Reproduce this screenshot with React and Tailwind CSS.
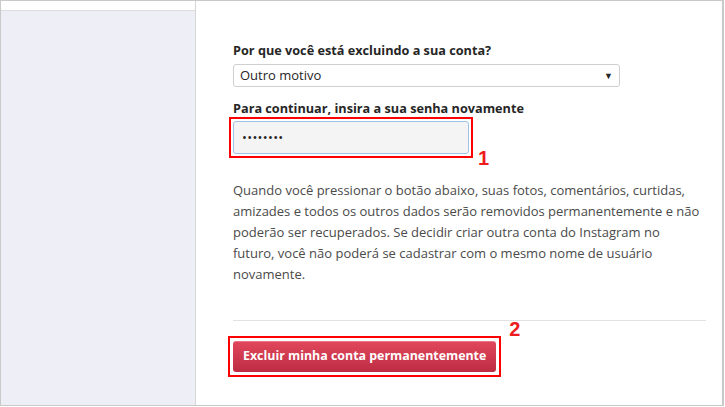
import React from 'react';

const lines = [
  'Quando você pressionar o botão abaixo, suas fotos, comentários, curtidas,',
  'amizades e todos os outros dados serão removidos permanentemente e não',
  'poderão ser recuperados. Se decidir criar outra conta do Instagram no',
  'futuro, você não poderá se cadastrar com o mesmo nome de usuário',
  'novamente.',
];

export default function App() {
  return (
    <div className="w-[725px] h-[407px] bg-white font-['Open_Sans',sans-serif] text-[13px]">
      <div className="flex h-[406px] w-[724px] border border-[#c9c9c9] border-r-2">
        {/* sidebar */}
        <div className="w-[195px] shrink-0 flex flex-col border-r border-[#d6d6d6]">
          <div className="h-[10px] bg-white border-b border-[#dbdbdb]" />
          <div className="flex-1 bg-[#eeeff6]" />
        </div>

        {/* main */}
        <div className="flex-1 pl-[37px] pr-[16px] pt-[40px]">
          <p className="font-bold text-[#262626] leading-[18px] text-[12.7px]">Por que você está excluindo a sua conta?</p>
          <div className="mt-[5px] w-[387px] h-[23px] border border-[#cfcfcf] rounded-[3px] flex items-center justify-between pl-[6px] pr-[6px] text-[#262626]">
            <span>Outro motivo</span>
            <span className="text-[9px]">▼</span>
          </div>

          <p className="mt-[12px] font-bold text-[#262626] leading-[18px] text-[12.7px]">Para continuar, insira a sua senha novamente</p>
          <div className="flex items-end">
            <div className="-ml-[4px] border-2 border-[#ff0000] p-[2px]">
              <div className="w-[236px] h-[33px] bg-[#f4f4f4] border border-[#9fc3e6] rounded-[3px] flex items-center pl-[8px] text-[#262626] tracking-[0.3px]">
                ••••••••
              </div>
            </div>
            <span className="ml-[5px] mb-[-12px] text-[#ee1c1c] font-bold text-[20px] leading-[24px] font-['Liberation_Sans',sans-serif]">1</span>
          </div>

          <div className="mt-[22px] text-[#4a4a4a] leading-[21px] whitespace-nowrap">
            {lines.map((l) => (
              <p key={l}>{l}</p>
            ))}
          </div>

          <div className="mt-[35px] border-t border-[#e2e2e2] w-[473px]" />

          <div className="flex items-start">
            <div className="mt-[15px] -ml-[5px] border-2 border-[#ff0000] p-[3px]">
              <button className="h-[31px] px-[10px] rounded-[3px] bg-gradient-to-b from-[#e2475c] to-[#bd2c43] text-white font-bold text-[12.4px] shadow-[inset_0_1px_0_rgba(255,255,255,0.25)]">
                Excluir minha conta permanentemente
              </button>
            </div>
            <span className="ml-[8px] -mt-[4px] text-[#ee1c1c] font-bold text-[20px] leading-[24px] font-['Liberation_Sans',sans-serif]">2</span>
          </div>
        </div>
      </div>
    </div>
  );
}
